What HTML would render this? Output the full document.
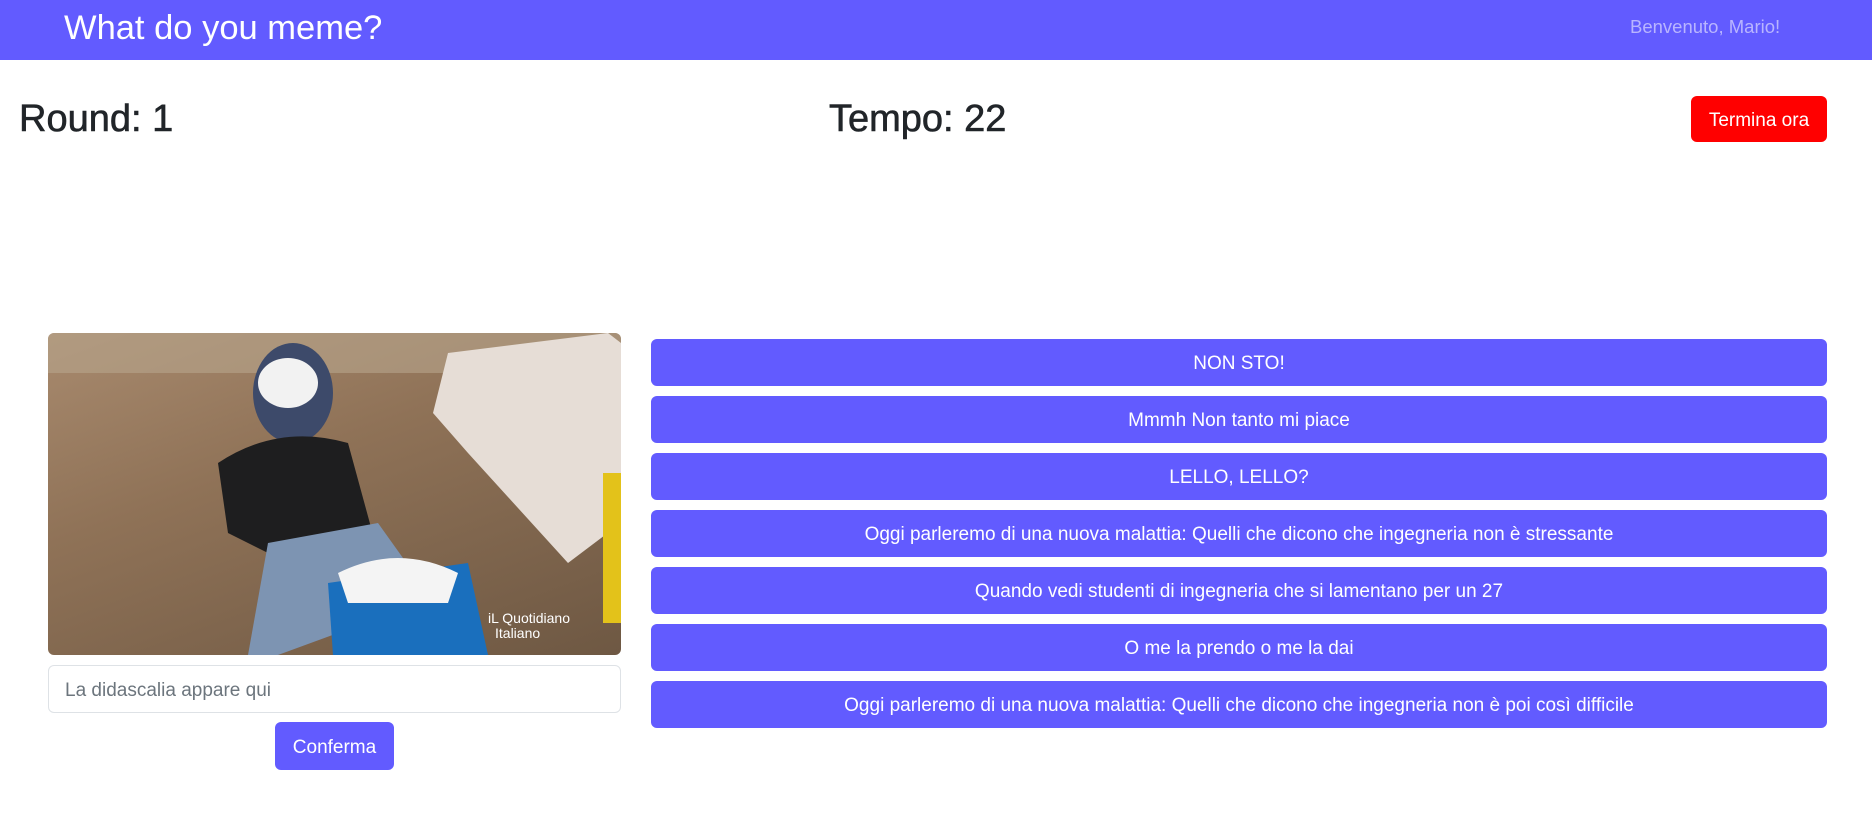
<!DOCTYPE html>
<html><head><meta charset="utf-8"><style>
*{box-sizing:border-box;margin:0;padding:0}
body{width:1872px;height:816px;background:#fff;font-family:"Liberation Sans",sans-serif;position:relative;overflow:hidden;color:#212529}
.nav{position:absolute;left:0;top:0;width:1872px;height:60px;background:#625bff}
.brand{position:absolute;left:64px;top:9px;font-size:34.5px;color:#fff}
.welcome{position:absolute;left:1630px;top:16px;font-size:18.5px;color:#b9b5ff}
h2{position:absolute;font-size:38px;font-weight:500;top:98px;-webkit-text-stroke:0.6px #212529}
.btn{position:absolute;color:#fff;border-radius:6px;font-size:19px;display:flex;align-items:center;justify-content:center;padding-top:3px}
.red{left:1691px;top:96px;width:136px;height:46px;background:#ff0000}
.img{position:absolute;left:48px;top:333px;width:573px;height:322px;border-radius:6px;overflow:hidden;background:linear-gradient(160deg,#a88a6e 0%,#8f7257 40%,#6e5843 100%)}
.input{position:absolute;left:48px;top:665px;width:573px;height:48px;border:1px solid #dee2e6;border-radius:6px;font-size:19px;color:#6c757d;padding:14px 16px 0}
.conf{left:275px;top:722px;width:119px;height:48px;background:#625bff}
.opt{left:651px;width:1176px;height:47px;background:#625bff;font-size:19px}
</style></head><body>
<div class="nav"><div class="brand">What do you meme?</div><div class="welcome">Benvenuto, Mario!</div></div>
<h2 style="left:19px">Round: 1</h2>
<h2 style="left:829px">Tempo: 22</h2>
<div class="btn red">Termina ora</div>
<div class="img">
<svg width="573" height="322" viewBox="0 0 573 322">
<rect x="0" y="0" width="573" height="40" fill="#b8a58c" opacity=".6"/>
<polygon points="400,20 560,0 573,10 573,190 520,230 420,120 385,80" fill="#e6ddd6"/>
<ellipse cx="245" cy="60" rx="40" ry="50" fill="#3d4a6a"/>
<ellipse cx="240" cy="50" rx="30" ry="25" fill="#f2f2f2"/>
<path d="M170 130 Q230 90 300 110 L330 220 L260 240 L180 200 Z" fill="#1e1e1f"/>
<path d="M220 210 L330 190 L380 260 L290 300 L230 322 L200 322 Z" fill="#7d94b2"/>
<path d="M280 250 L420 230 L440 322 L285 322 Z" fill="#1a6fbd"/>
<path d="M290 240 Q350 210 410 240 L400 270 L300 270 Z" fill="#f4f4f4"/>
<rect x="555" y="140" width="18" height="150" fill="#e3c21a"/>
<text x="440" y="290" font-family="Liberation Sans" font-size="14" fill="#fff">iL Quotidiano</text>
<text x="447" y="305" font-family="Liberation Sans" font-size="14" fill="#fff">Italiano</text>
</svg></div>
<div class="input">La didascalia appare qui</div>
<div class="btn conf">Conferma</div>
<div class="btn opt" style="top:339px">NON STO!</div>
<div class="btn opt" style="top:396px">Mmmh Non tanto mi piace</div>
<div class="btn opt" style="top:453px">LELLO, LELLO?</div>
<div class="btn opt" style="top:510px">Oggi parleremo di una nuova malattia: Quelli che dicono che ingegneria non è stressante</div>
<div class="btn opt" style="top:567px">Quando vedi studenti di ingegneria che si lamentano per un 27</div>
<div class="btn opt" style="top:624px">O me la prendo o me la dai</div>
<div class="btn opt" style="top:681px">Oggi parleremo di una nuova malattia: Quelli che dicono che ingegneria non è poi così difficile</div>
</body></html>
